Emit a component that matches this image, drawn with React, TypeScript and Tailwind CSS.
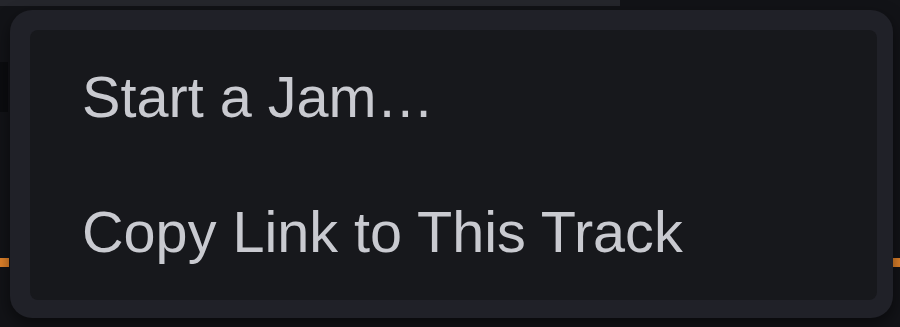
export default function App() {
  const items = ["Start a Jam…", "Copy Link to This Track"]

  return (
    <div className="relative w-[900px] h-[327px] overflow-hidden bg-[#121317] font-['Liberation_Sans',Arial,sans-serif]">
      {/* stuff behind the menu */}
      <div className="absolute left-0 top-0 w-[620px] h-[6px] bg-[#25262c]" />
      <div className="absolute left-0 top-[62px] w-[8px] h-[50px] bg-[#0b0c0f]" />
      <div className="absolute left-0 top-[258px] w-[9px] h-[9px] bg-[#e0822a]" />
      <div className="absolute right-0 top-[258px] w-[7px] h-[9px] bg-[#e0822a]" />

      <div className="absolute left-[10px] top-[10px] w-[883px] h-[308px] rounded-[22px] bg-[#202128] pt-[20px] pl-[20px] pr-[16px] pb-[18px] shadow-[0_6px_16px_rgba(0,0,0,0.5)]">
        <div className="flex h-full flex-col rounded-[8px] bg-[#17181c]">
          {items.map((label) => (
            <div key={label} className="flex flex-1 items-center pl-[52px] text-[57.6px] leading-none text-[#c9cad0]">
              {label}
            </div>
          ))}
        </div>
      </div>
    </div>
  )
}
